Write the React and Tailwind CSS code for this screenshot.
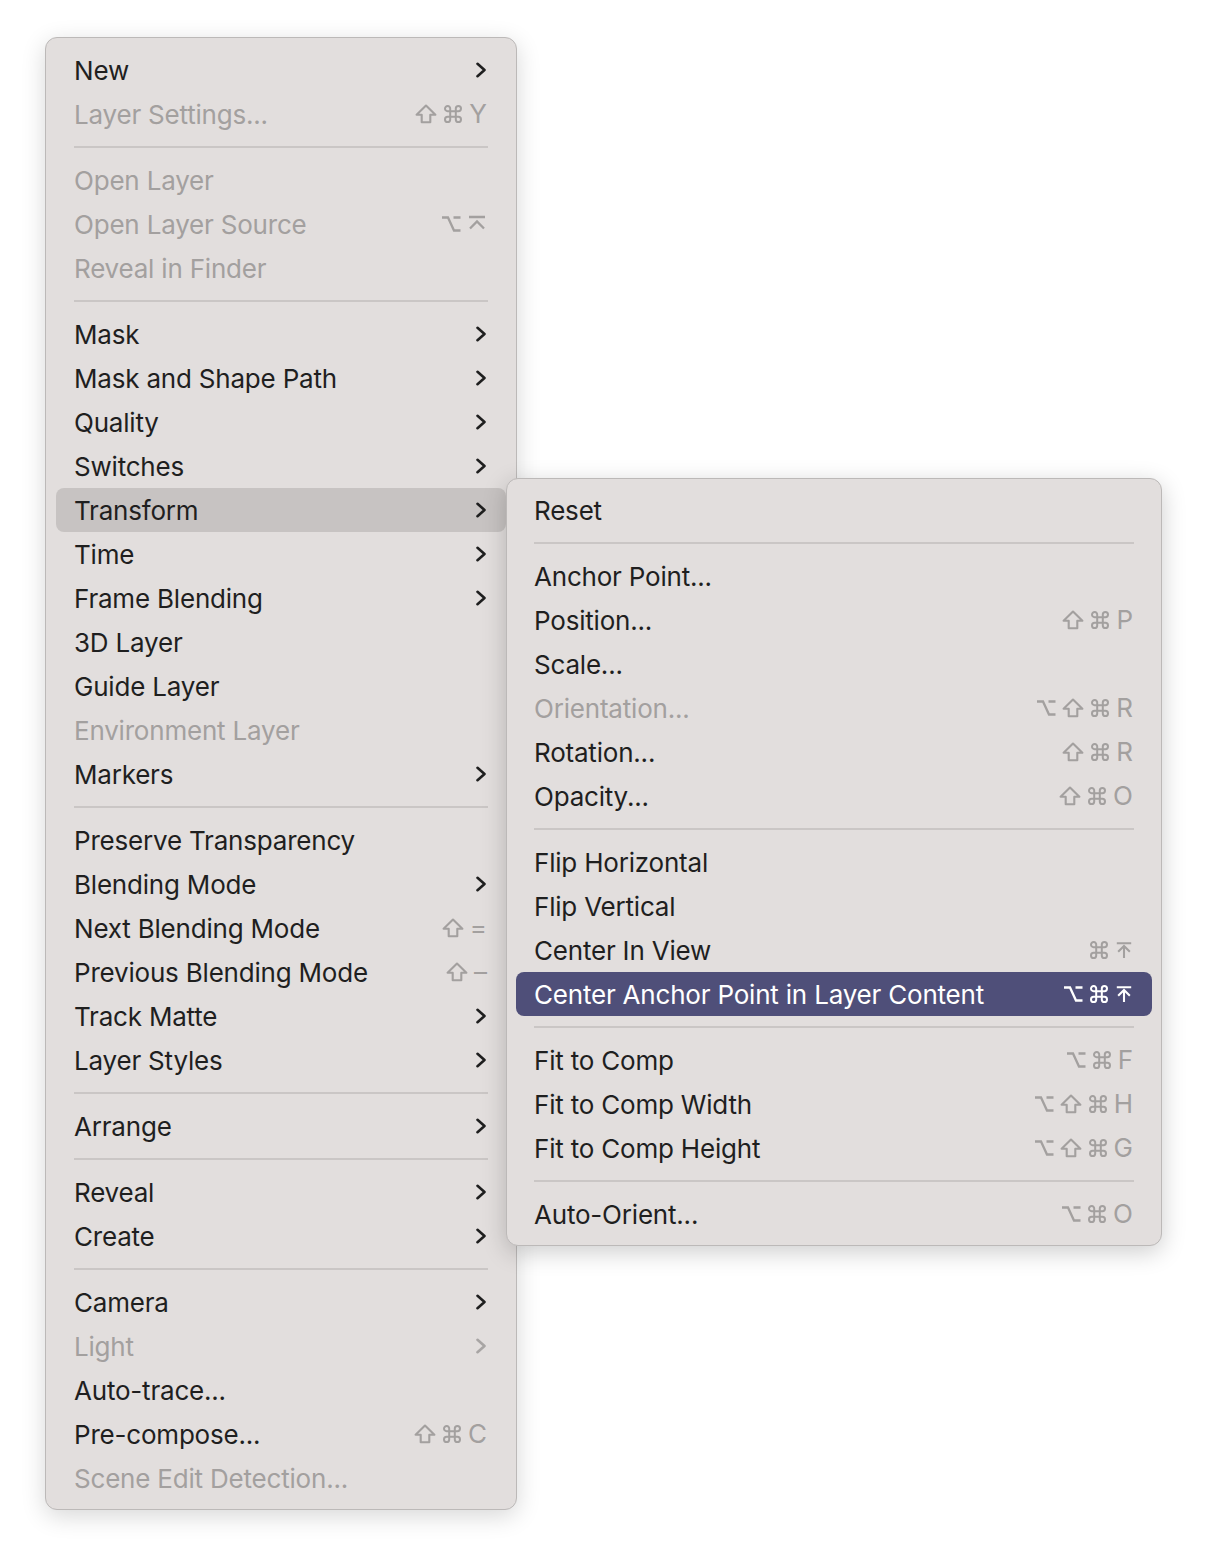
import React from "react";

const Shift = () => (
  <svg viewBox="0 0 22 20" className="w-[22px] h-[20px]" fill="none" stroke="currentColor" strokeWidth="2.1" strokeLinejoin="round">
    <path d="M11 1.6 L20.4 10.8 H15.3 V18.2 H6.7 V10.8 H1.6 Z" />
  </svg>
);
const Cmd = () => (
  <svg viewBox="0 0 20 20" className="w-[20px] h-[20px]" fill="none" stroke="currentColor" strokeWidth="2">
    <path d="M7.2 7.2 V4.8 A2.6 2.6 0 1 0 4.6 7.2 H15.4 A2.6 2.6 0 1 0 12.8 4.6 V15.4 A2.6 2.6 0 1 0 15.4 12.8 H4.6 A2.6 2.6 0 1 0 7.2 15.4 Z" />
  </svg>
);
const Opt = () => (
  <svg viewBox="0 0 20 20" className="w-[20px] h-[20px]" fill="none" stroke="currentColor" strokeWidth="2.3" strokeLinejoin="miter">
    <path d="M1 3.5 H7 L13 16.5 H19.5 M12.5 3.5 H19.5" />
  </svg>
);
const Enter = () => (
  <svg viewBox="0 0 20 20" className="w-[20px] h-[20px]" fill="none" stroke="currentColor" strokeWidth="2.3">
    <path d="M2 3 H18 M3 14.5 L10 7.5 L17 14.5" />
  </svg>
);
const Home = () => (
  <svg viewBox="0 0 20 20" className="w-[18px] h-[20px]" fill="none" stroke="currentColor" strokeWidth="2.3">
    <path d="M2 2.5 H18 M10 6 V19 M3.5 12 L10 5.5 L16.5 12" />
  </svg>
);
const Chevron = ({ color }) => (
  <svg viewBox="0 0 12 16" className="w-[12px] h-[16px]" fill="none" stroke={color} strokeWidth="2.6" strokeLinecap="round" strokeLinejoin="round">
    <path d="M2.5 1.8 L9.5 8 L2.5 14.2" />
  </svg>
);

const symbolMap = { S: Shift, C: Cmd, O: Opt, E: Enter, H: Home };

function Shortcut({ keys, color }) {
  return (
    <div className="flex items-center gap-[6px]" style={{ color }}>
      {keys.map((k, i) => {
        if (typeof k === "string" && k.startsWith("$")) {
          const Comp = symbolMap[k.slice(1)];
          return <Comp key={i} />;
        }
        return (
          <span key={i} className="leading-none text-[26px]">
            {k}
          </span>
        );
      })}
    </div>
  );
}

function Row({ item, side }) {
  const { label, sub, disabled, keys, hl } = item;
  const mx = side === "main" ? "mx-[10px]" : "mx-[9px]";
  let bg = "";
  let textColor = disabled ? "text-[#a3a09f]" : "text-[#1f1f1f]";
  let keyColor = "#a3a09f";
  let chevColor = disabled ? "#a8a5a4" : "#1f1f1f";
  if (hl === "gray") bg = "bg-[#c7c3c2]";
  if (hl === "blue") {
    bg = "bg-[#4f4f79]";
    textColor = "text-white";
    keyColor = "#ffffff";
  }
  return (
    <div className={`${mx} ${bg} rounded-[8px] h-[44px] pl-[18px] pr-[19px] flex items-center justify-between`}>
      <span className={`${textColor} text-[26px] leading-none tracking-[-0.2px] pt-[1px]`}>{label}</span>
      {sub && <Chevron color={chevColor} />}
      {keys && <Shortcut keys={keys} color={keyColor} />}
    </div>
  );
}

function Sep({ side }) {
  return (
    <div className="h-[22px] flex items-center">
      <div className={`h-[2px] bg-[#cac6c5] w-full ${side === "main" ? "mx-[28px]" : "mx-[27px]"}`} />
    </div>
  );
}

function Menu({ items, side }) {
  return (
    <div>
      {items.map((it, i) =>
        it === "sep" ? <Sep key={i} side={side} /> : <Row key={i} item={it} side={side} />
      )}
    </div>
  );
}

const mainItems = [
  { label: "New", sub: true },
  { label: "Layer Settings...", disabled: true, keys: ["$S", "$C", "Y"] },
  "sep",
  { label: "Open Layer", disabled: true },
  { label: "Open Layer Source", disabled: true, keys: ["$O", "$E"] },
  { label: "Reveal in Finder", disabled: true },
  "sep",
  { label: "Mask", sub: true },
  { label: "Mask and Shape Path", sub: true },
  { label: "Quality", sub: true },
  { label: "Switches", sub: true },
  { label: "Transform", sub: true, hl: "gray" },
  { label: "Time", sub: true },
  { label: "Frame Blending", sub: true },
  { label: "3D Layer" },
  { label: "Guide Layer" },
  { label: "Environment Layer", disabled: true },
  { label: "Markers", sub: true },
  "sep",
  { label: "Preserve Transparency" },
  { label: "Blending Mode", sub: true },
  { label: "Next Blending Mode", keys: ["$S", "="] },
  { label: "Previous Blending Mode", keys: ["$S", "–"] },
  { label: "Track Matte", sub: true },
  { label: "Layer Styles", sub: true },
  "sep",
  { label: "Arrange", sub: true },
  "sep",
  { label: "Reveal", sub: true },
  { label: "Create", sub: true },
  "sep",
  { label: "Camera", sub: true },
  { label: "Light", sub: true, disabled: true },
  { label: "Auto-trace..." },
  { label: "Pre-compose...", keys: ["$S", "$C", "C"] },
  { label: "Scene Edit Detection...", disabled: true },
];

const subItems = [
  { label: "Reset" },
  "sep",
  { label: "Anchor Point..." },
  { label: "Position...", keys: ["$S", "$C", "P"] },
  { label: "Scale..." },
  { label: "Orientation...", disabled: true, keys: ["$O", "$S", "$C", "R"] },
  { label: "Rotation...", keys: ["$S", "$C", "R"] },
  { label: "Opacity...", keys: ["$S", "$C", "O"] },
  "sep",
  { label: "Flip Horizontal" },
  { label: "Flip Vertical" },
  { label: "Center In View", keys: ["$C", "$H"] },
  { label: "Center Anchor Point in Layer Content", keys: ["$O", "$C", "$H"], hl: "blue" },
  "sep",
  { label: "Fit to Comp", keys: ["$O", "$C", "F"] },
  { label: "Fit to Comp Width", keys: ["$O", "$S", "$C", "H"] },
  { label: "Fit to Comp Height", keys: ["$O", "$S", "$C", "G"] },
  "sep",
  { label: "Auto-Orient...", keys: ["$O", "$C", "O"] },
];

export default function App() {
  return (
    <div
      className="relative w-[1208px] h-[1564px] bg-white pl-[45px] pt-[37px]"
      style={{ fontFamily: "Inter, 'Noto Sans', sans-serif" }}
    >
      <div className="w-[472px] bg-[#e2dedd] rounded-[12px] border border-[#bcb9b8] pt-[10px] pb-[9px] shadow-[0_6px_24px_rgba(0,0,0,0.16)]">
        <Menu items={mainItems} side="main" />
      </div>
      <div className="absolute left-[506px] top-[478px] w-[656px] bg-[#e2dedd] rounded-[12px] border border-[#bcb9b8] pt-[9px] pb-[9px] shadow-[0_6px_24px_rgba(0,0,0,0.2)]">
        <Menu items={subItems} side="sub" />
      </div>
    </div>
  );
}
